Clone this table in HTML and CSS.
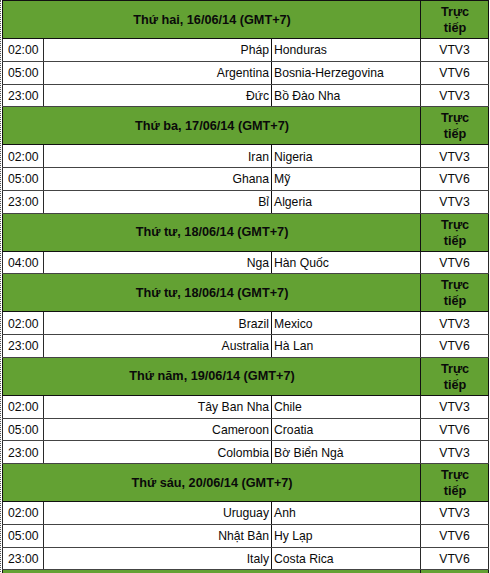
FILE: index.html
```html
<!DOCTYPE html>
<html lang="vi">
<head>
<meta charset="utf-8">
<title>Lịch thi đấu</title>
<link rel="stylesheet" href="styles.css">
</head>
<body>
<div class="sheet">
<table class="schedule">
<colgroup>
<col class="c-time"><col class="c-home"><col class="c-gap"><col class="c-away"><col class="c-tv">
</colgroup>
<tbody>
<tr class="day"><td colspan="4">Thứ hai, 16/06/14 (GMT+7)</td><td class="tv-head">Trực<br>tiếp</td></tr>
<tr class="match"><td class="time">02:00</td><td class="home" colspan="2">Pháp</td><td class="away">Honduras</td><td class="tv">VTV3</td></tr>
<tr class="match"><td class="time">05:00</td><td class="home" colspan="2">Argentina</td><td class="away">Bosnia-Herzegovina</td><td class="tv">VTV6</td></tr>
<tr class="match"><td class="time">23:00</td><td class="home" colspan="2">Đức</td><td class="away">Bồ Đào Nha</td><td class="tv">VTV3</td></tr>

<tr class="day"><td colspan="4">Thứ ba, 17/06/14 (GMT+7)</td><td class="tv-head">Trực<br>tiếp</td></tr>
<tr class="match"><td class="time">02:00</td><td class="home" colspan="2">Iran</td><td class="away">Nigeria</td><td class="tv">VTV3</td></tr>
<tr class="match"><td class="time">05:00</td><td class="home" colspan="2">Ghana</td><td class="away">Mỹ</td><td class="tv">VTV6</td></tr>
<tr class="match"><td class="time">23:00</td><td class="home" colspan="2">Bỉ</td><td class="away">Algeria</td><td class="tv">VTV3</td></tr>

<tr class="day"><td colspan="4">Thứ tư, 18/06/14 (GMT+7)</td><td class="tv-head">Trực<br>tiếp</td></tr>
<tr class="match"><td class="time">04:00</td><td class="home" colspan="2">Nga</td><td class="away">Hàn Quốc</td><td class="tv">VTV6</td></tr>

<tr class="day"><td colspan="4">Thứ tư, 18/06/14 (GMT+7)</td><td class="tv-head">Trực<br>tiếp</td></tr>
<tr class="match"><td class="time">02:00</td><td class="home" colspan="2">Brazil</td><td class="away">Mexico</td><td class="tv">VTV3</td></tr>
<tr class="match"><td class="time">23:00</td><td class="home" colspan="2">Australia</td><td class="away">Hà Lan</td><td class="tv">VTV6</td></tr>

<tr class="day"><td colspan="4">Thứ năm, 19/06/14 (GMT+7)</td><td class="tv-head">Trực<br>tiếp</td></tr>
<tr class="match"><td class="time">02:00</td><td class="home" colspan="2">Tây Ban Nha</td><td class="away">Chile</td><td class="tv">VTV3</td></tr>
<tr class="match"><td class="time">05:00</td><td class="home" colspan="2">Cameroon</td><td class="away">Croatia</td><td class="tv">VTV6</td></tr>
<tr class="match"><td class="time">23:00</td><td class="home" colspan="2">Colombia</td><td class="away">Bờ Biển Ngà</td><td class="tv">VTV3</td></tr>

<tr class="day"><td colspan="4">Thứ sáu, 20/06/14 (GMT+7)</td><td class="tv-head">Trực<br>tiếp</td></tr>
<tr class="match"><td class="time">02:00</td><td class="home" colspan="2">Uruguay</td><td class="away">Anh</td><td class="tv">VTV3</td></tr>
<tr class="match"><td class="time">05:00</td><td class="home" colspan="2">Nhật Bản</td><td class="away">Hy Lạp</td><td class="tv">VTV6</td></tr>
<tr class="match"><td class="time">23:00</td><td class="home" colspan="2">Italy</td><td class="away">Costa Rica</td><td class="tv">VTV6</td></tr>

<tr class="day"><td colspan="4"></td><td class="tv-head"></td></tr>
</tbody>
</table>
</div>
</body>
</html>
```

FILE: styles.css
```css
html, body {
  margin: 0;
  padding: 0;
  overflow: hidden;
  background: #ffffff;
}

.sheet {
  border-left: 1px dotted #555555;
  padding-left: 1px;
  width: 488px;
}

.schedule {
  border-collapse: collapse;
  table-layout: fixed;
  width: 487px;
  font-family: "Liberation Sans", Arial, sans-serif;
  font-size: 12.2px;
  color: #0a0a0a;
}

.c-time { width: 41px; }
.c-home { width: 193px; }
.c-gap { width: 35px; }
.c-away { width: 149px; }
.c-tv { width: 68px; }

.schedule td {
  padding: 0;
  border: 1px solid #2a2a2a;
  overflow: hidden;
  white-space: nowrap;
}

.day {
  height: 38px;
  background: #63a133;
}

.day td {
  font-weight: bold;
  font-size: 12.7px;
  text-align: center;
  vertical-align: middle;
  border-color: #111111;
  padding-left: 1px;
}

.day .tv-head {
  line-height: 16px;
  padding-top: 1px;
}

.match {
  height: 22.75px;
}

.match td {
  border-top-color: #444444;
  border-bottom-color: #444444;
  vertical-align: middle;
  padding-top: 1px;
}

.match .time {
  text-align: left;
  padding-left: 5px;
}

.match .home {
  text-align: right;
  padding-right: 2px;
  border-right-color: #111111;
}

.match .away {
  text-align: left;
  padding-left: 2px;
}

.match .tv {
  text-align: center;
}
```
